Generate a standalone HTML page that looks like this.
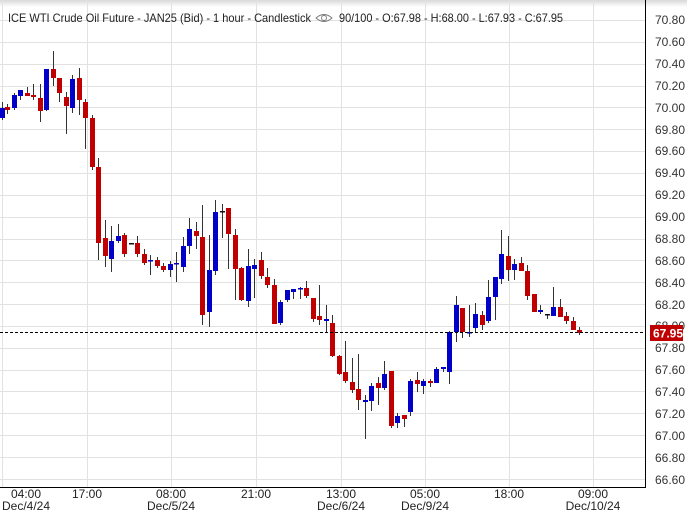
<!DOCTYPE html>
<html><head><meta charset="utf-8"><style>
html,body{margin:0;padding:0;background:#fff;width:687px;height:512px;overflow:hidden}
svg{display:block;font-family:"Liberation Sans",Arial,sans-serif}
</style></head><body>
<svg id="s" width="687" height="512" viewBox="0 0 687 512" xmlns="http://www.w3.org/2000/svg">
<defs><linearGradient id="tg" x1="0" y1="0" x2="0" y2="1"><stop offset="0" stop-color="#d8d8d8"/><stop offset="1" stop-color="#fff"/></linearGradient></defs>
<rect x="0" y="0" width="687" height="7" fill="url(#tg)"/>
<g id="grid" stroke="#e2e2e2" stroke-width="1"></g>
<g id="c"></g>
<line x1="0" y1="332.5" x2="645" y2="332.5" stroke="#000" stroke-dasharray="3,2"/>
<line x1="645.5" y1="0" x2="645.5" y2="487" stroke="#000"/>
<line x1="0" y1="487.5" x2="646" y2="487.5" stroke="#000"/>
<text x="8" y="22" font-size="12" fill="#222" textLength="303" lengthAdjust="spacingAndGlyphs">ICE WTI Crude Oil Future - JAN25 (Bid) - 1 hour - Candlestick</text>
<g stroke="#777" fill="none" stroke-width="0.9"><path d="M316 18 Q324 11 332 18 Q324 25 316 18Z"/><circle cx="324" cy="18" r="2.5"/></g>
<text x="339" y="22" font-size="12" fill="#222" textLength="224" lengthAdjust="spacingAndGlyphs">90/100 - O:67.98 - H:68.00 - L:67.93 - C:67.95</text>
<g font-size="12" fill="#333">
<text x="655" y="24">70.80</text><text x="655" y="46">70.60</text><text x="655" y="68">70.40</text><text x="655" y="90">70.20</text><text x="655" y="112">70.00</text><text x="655" y="134">69.80</text><text x="655" y="155">69.60</text><text x="655" y="177">69.40</text><text x="655" y="199">69.20</text><text x="655" y="221">69.00</text><text x="655" y="243">68.80</text><text x="655" y="265">68.60</text><text x="655" y="287">68.40</text><text x="655" y="309">68.20</text><text x="655" y="330">68.00</text><text x="655" y="352">67.80</text><text x="655" y="374">67.60</text><text x="655" y="396">67.40</text><text x="655" y="418">67.20</text><text x="655" y="440">67.00</text><text x="655" y="462">66.80</text><text x="655" y="484">66.60</text>
</g>
<rect x="650" y="325" width="33" height="16" fill="#c00000"/>
<text x="653" y="337.5" font-size="12" font-weight="bold" fill="#fff">67.95</text>
<g font-size="12" fill="#222" text-anchor="middle">
<text x="26" y="498">04:00</text><text x="26" y="510">Dec/4/24</text>
<text x="87" y="498">17:00</text>
<text x="171" y="498">08:00</text><text x="171" y="510">Dec/5/24</text>
<text x="256" y="498">21:00</text>
<text x="341" y="498">13:00</text><text x="341" y="510">Dec/6/24</text>
<text x="425" y="498">05:00</text><text x="425" y="510">Dec/9/24</text>
<text x="509" y="498">18:00</text>
<text x="593" y="498">09:00</text><text x="593" y="510">Dec/10/24</text>
</g>
</svg>
<script>
var NS="http://www.w3.org/2000/svg";
var g=document.getElementById("grid");
function ln(x1,y1,x2,y2){var l=document.createElementNS(NS,"line");l.setAttribute("x1",x1);l.setAttribute("y1",y1);l.setAttribute("x2",x2);l.setAttribute("y2",y2);g.appendChild(l);}
for(var i=0;i<22;i++){var y=Math.round(20+i*21.85)+0.5;ln(0,y,645,y);}
[2,87,171,256,341,425,509,593].forEach(function(x){ln(x+0.5,0,x+0.5,487);});
// x, bodyTop, bodyBottom, wickTop, wickBottom, color(r/b/k)
var C=[
[2,108,118,102,120,'b'],[7,107,110,104,114,'r'],[14,95,108,93,110,'b'],[20,90,96,90,100,'b'],[27,93,96,87,96,'r'],[33,95,97,84,100,'r'],[40,98,111,84,122,'r'],[46,69,110,69,111,'b'],[53,69,78,51,86,'r'],[59,78,93,78,102,'r'],[66,97,106,92,134,'r'],[72,79,108,75,113,'b'],[79,78,100,68,115,'r'],[85,102,118,99,149,'r'],[92,118,167,115,170,'r'],[98,167,243,158,260,'r'],[105,238,256,220,267,'r'],[111,241,259,226,272,'b'],[118,236,241,224,243,'b'],[124,235,254,233,257,'r'],[131,243,243,243,243,'k'],[137,243,254,236,257,'r'],[144,254,263,249,265,'r'],[150,260,260,255,275,'b'],[157,260,266,257,268,'r'],[163,266,270,263,272,'r'],[170,264,270,261,277,'b'],[176,263,263,252,282,'b'],[183,246,267,237,272,'b'],[189,229,246,218,254,'b'],[196,231,236,222,249,'r'],[202,237,315,205,325,'r'],[209,270,312,235,327,'b'],[215,212,271,200,275,'b'],[222,211,211,204,238,'k'],[228,208,234,208,269,'r'],[235,235,269,229,300,'r'],
[241,268,300,267,301,'r'],[248,266,301,249,307,'b'],[254,265,269,259,298,'b'],[261,260,276,252,279,'r'],[267,277,285,268,288,'r'],[274,285,324,279,324,'r'],[280,302,323,300,325,'b'],[287,290,300,290,302,'b'],[293,289,292,289,299,'b'],[300,288,289,287,299,'b'],[306,288,296,281,298,'r'],[313,298,319,298,322,'r'],[319,316,320,285,325,'r'],[326,319,321,305,332,'b'],[332,323,356,315,357,'r'],[339,356,374,355,375,'r'],[345,372,381,341,383,'r'],[352,382,390,358,393,'r'],[358,389,400,354,410,'r'],[365,400,402,395,439,'b'],[371,386,401,383,411,'b'],[378,383,388,377,405,'r'],[384,374,388,361,390,'b'],[391,371,426,371,428,'r'],[397,416,423,413,428,'b'],[404,415,419,415,427,'r'],[410,381,412,379,416,'b'],[417,380,384,372,392,'r'],
[423,381,386,379,394,'b'],[430,381,383,379,387,'r'],[436,369,383,367,383,'b'],[443,367,369,367,372,'b'],[449,332,372,331,384,'b'],[456,305,332,296,342,'b'],[462,308,332,308,338,'r'],[469,332,333,305,337,'b'],[475,314,328,303,332,'b'],[482,315,325,311,330,'r'],[488,297,321,280,323,'b'],[495,277,297,277,320,'b'],[501,254,279,230,284,'b'],[508,256,270,236,281,'r'],[514,264,270,259,280,'b'],[521,263,271,257,271,'r'],[527,271,296,265,300,'r'],[534,294,312,294,312,'r'],[540,310,312,305,314,'b'],[547,314,314,314,319,'k'],[553,307,316,287,316,'b'],[560,307,317,299,317,'r'],[566,316,321,312,324,'r'],[573,321,330,317,330,'r'],[579,330,333,327,335,'r']];
var cg=document.getElementById("c");
var col={r:'#c00000',b:'#0000c8',k:'#111'};
C.forEach(function(c){
 var x=c[0];
 if(c[4]>c[3]){var w=document.createElementNS(NS,"line");w.setAttribute("x1",x+0.5);w.setAttribute("x2",x+0.5);w.setAttribute("y1",c[3]);w.setAttribute("y2",c[4]);w.setAttribute("stroke","#333");cg.appendChild(w);}
 var r=document.createElementNS(NS,"rect");r.setAttribute("x",x-2);r.setAttribute("width",5);r.setAttribute("y",c[1]);r.setAttribute("height",Math.max(1.5,c[2]-c[1]));r.setAttribute("fill",col[c[5]]);cg.appendChild(r);
});
</script>
</body></html>
